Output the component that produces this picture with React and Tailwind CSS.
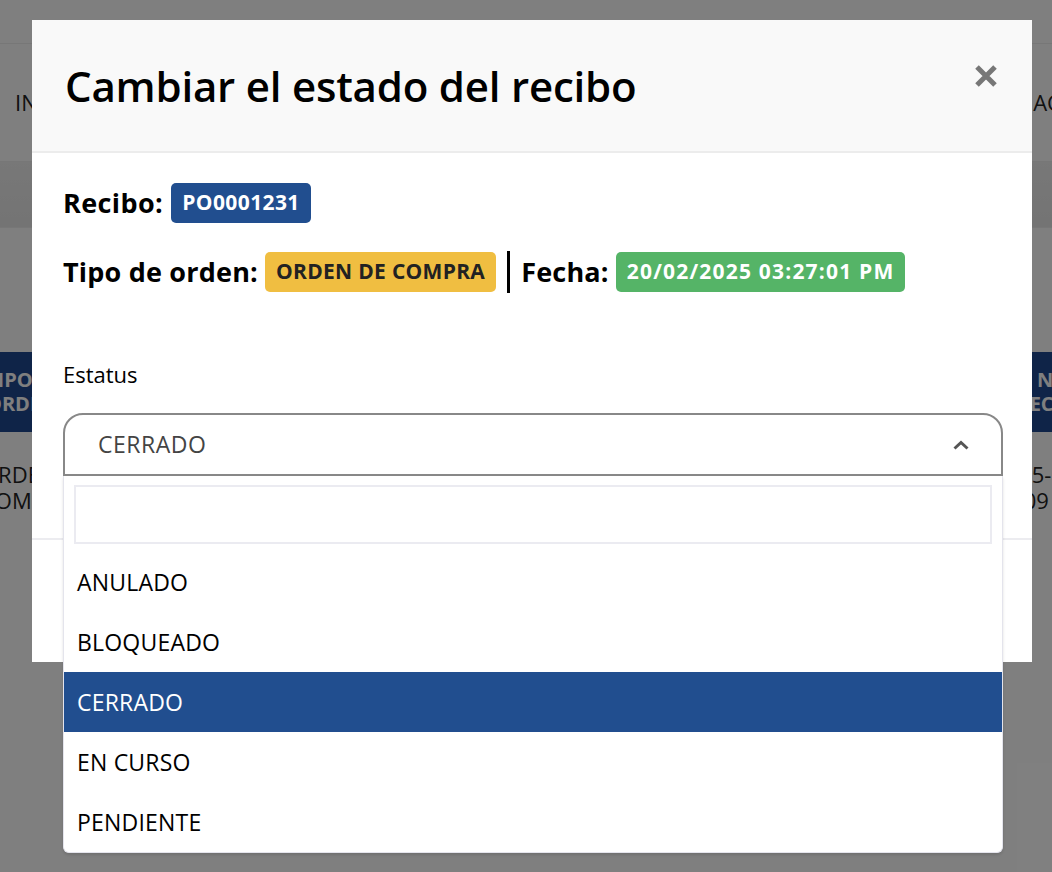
import React, { useState } from 'react';

const font = { fontFamily: '"Open Sans", "Lato", sans-serif' };

function BackgroundPage() {
  return (
    <div className="h-[872px] w-full overflow-hidden bg-white text-[#222]">
      <div className="h-[44px] border-b border-[#eee] bg-[#fefefe]" />
      <div className="grid h-[118px] grid-cols-[973px_auto] items-center border-b border-[#eee] pl-[15px] text-[22px]">
        <span>INICIO</span>
        <span className="whitespace-nowrap">ALMACÉN</span>
      </div>
      <div className="h-[66px] border-b border-[#eee] bg-gradient-to-b from-[#f0f0f0] to-[#e8e8e8]" />
      <div className="h-[124px]" />
      <div className="grid h-[80px] grid-cols-[1013px_80px] items-center bg-[#1e4890] text-[20px] font-bold leading-[24px] text-white">
        <span className="-ml-[14px]">TIPO<br />ORDEN</span>
        <span className="whitespace-nowrap text-center">NO<br />RECIBO</span>
      </div>
      <div className="grid h-[110px] grid-cols-[994px_auto] items-center text-[22px] leading-[26px]">
        <span className="-ml-[19px]">ORDEN<br />COMPRA</span>
        <span className="whitespace-nowrap">2025-02-20<br />&nbsp;&nbsp;7:09</span>
      </div>
    </div>
  );
}

function Badge({ color, children }) {
  return (
    <span className={`inline-flex h-[40px] items-center rounded-[5px] px-[11px] text-[21px] font-bold ${color}`}>
      {children}
    </span>
  );
}

function StatusSelect() {
  const options = ['ANULADO', 'BLOQUEADO', 'CERRADO', 'EN CURSO', 'PENDIENTE'];
  const [selected] = useState('CERRADO');

  return (
    <div className="relative w-[940px]">
      <div className="flex h-[63px] items-center justify-between rounded-t-[20px] border-2 border-[#888] bg-white pl-[33px] pr-[31px]">
        <span className="text-[23px] tracking-[0.5px] text-[#444]">{selected}</span>
        <svg width="18" height="12" viewBox="0 0 18 12" fill="none">
          <path d="M2.5 9.5 L9 3.5 L15.5 9.5" stroke="#555" strokeWidth="3" />
        </svg>
      </div>
      <div className="absolute left-0 top-[63px] z-10 w-[940px] rounded-b-[6px] border border-t-0 border-[#e4e4ec] bg-white shadow-[0_2px_3px_rgba(0,0,0,0.12)]">
        <div className="px-[10px] pt-[9px] pb-[8px]">
          <div className="h-[59px] border-2 border-[#ebebf1] bg-white" />
        </div>
        {options.map((opt) => (
          <div
            key={opt}
            className={`flex h-[60px] items-center pl-[13px] text-[23px] tracking-[0.2px] ${
              opt === selected ? 'bg-[#214e8f] text-white' : 'text-black'
            }`}
          >
            {opt}
          </div>
        ))}
      </div>
    </div>
  );
}

export default function App() {
  return (
    <div className="relative h-[872px] w-full overflow-hidden" style={font}>
      <BackgroundPage />
      <div className="absolute inset-0 bg-black/50">
        <div className="ml-[32px] mt-[20px] w-[1000px] bg-white">
          {/* header */}
          <div className="flex h-[133px] items-start justify-between border-b-2 border-[#ececec] bg-[#f9f9f9] pl-[33px] pr-[34px]">
            <h1 className="mt-[38px] text-[42px] font-semibold leading-[56px] tracking-[-0.2px] text-black">
              Cambiar el estado del recibo
            </h1>
            <button className="mt-[44px] text-[#777]" aria-label="Cerrar">
              <svg width="24" height="24" viewBox="0 0 24 24">
                <path d="M3 3 L21 21 M21 3 L3 21" stroke="#777" strokeWidth="5" />
              </svg>
            </button>
          </div>

          {/* body */}
          <div className="h-[387px] border-b-2 border-[#ececf0] pl-[31px] pt-[30px]">
            <div className="flex h-[40px] items-center gap-[8px]">
              <span className="text-[27px] font-bold tracking-[0.4px] text-black">Recibo:</span>
              <Badge color="bg-[#214e8f] text-white tracking-[0.4px]">PO0001231</Badge>
            </div>
            <div className="mt-[29px] flex h-[40px] items-center gap-[7px]">
              <span className="text-[27px] font-bold text-black tracking-[0.2px]">Tipo de orden:</span>
              <Badge color="bg-[#f0be41] text-[#222] tracking-[0.3px]">ORDEN DE COMPRA</Badge>
              <span className="mx-[4px] h-[42px] w-[3px] bg-black" />
              <span className="text-[27px] font-bold text-black tracking-[0.2px]">Fecha:</span>
              <Badge color="bg-[#55b467] text-white tracking-[1.2px]">20/02/2025 03:27:01 PM</Badge>
            </div>
            <div className="mt-[67px] text-[22px] leading-[30px] text-black">Estatus</div>
            <div className="mt-[24px]">
              <StatusSelect />
            </div>
          </div>

          {/* footer */}
          <div className="h-[122px]" />
        </div>
      </div>
    </div>
  );
}
